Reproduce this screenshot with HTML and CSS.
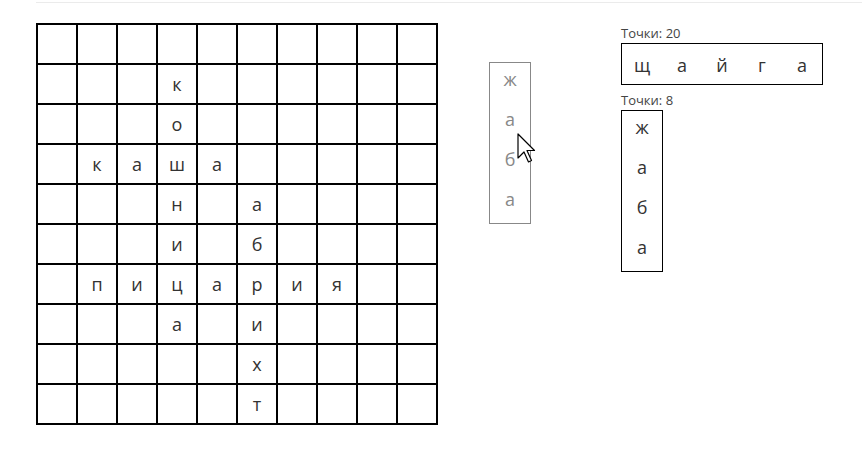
FILE: index.html
```html
<!DOCTYPE html>
<html>

<head>
    <title>Слова</title>
    <link rel="stylesheet" href="styles.css">
</head>

<body>
    <div class="page">
        <div class="game">
            <div class="board" id="board"></div>

            <div class="players">
                <div class="player">
                    <div class="score">Точки: 20</div>
                    <div class="hand">
                        <div class="tile">щ</div>
                        <div class="tile">а</div>
                        <div class="tile">й</div>
                        <div class="tile">г</div>
                        <div class="tile">а</div>
                    </div>
                </div>
                <div class="player">
                    <div class="score">Точки: 8</div>
                    <div class="hand vertical">
                        <div class="tile">ж</div>
                        <div class="tile">а</div>
                        <div class="tile">б</div>
                        <div class="tile">а</div>
                    </div>
                </div>
            </div>

            <div class="dragging">
                <div class="tile">ж</div>
                <div class="tile">а</div>
                <div class="tile">б</div>
                <div class="tile">а</div>
            </div>

            <svg class="cursor" width="20" height="30" viewBox="0 0 20 30">
                <path d="M1 1 L1 25 L7 19 L11.5 29 L14.5 27.5 L10 17.5 L17.5 17.5 Z" fill="#fff" stroke="#000" stroke-width="1.2" stroke-linejoin="round" />
            </svg>
        </div>
    </div>

    <script>
        const rows = [
            '          ',
            '   к      ',
            '   о      ',
            ' каша     ',
            '   н а    ',
            '   и б    ',
            ' пицария  ',
            '   а и    ',
            '     х    ',
            '     т    '
        ];

        const board = document.getElementById('board');
        rows.forEach(row => {
            for (const ch of row) {
                const cell = document.createElement('div');
                cell.className = 'cell';
                cell.textContent = ch.trim();
                board.appendChild(cell);
            }
        });
    </script>
</body>

</html>
```

FILE: styles.css
```css
body {
    margin: 0;
    font-family: "Open Sans", "Noto Sans", sans-serif;
    color: #333;
}

.page {
    margin: 2px 0 0 36px;
    border-top: 1px solid #ebebeb;
    padding-top: 20px;
}

.game {
    position: relative;
    display: flex;
    align-items: flex-start;
}

.board {
    display: grid;
    grid-template-columns: repeat(10, 40px);
    grid-auto-rows: 40px;
    border-left: 2px solid #000;
    border-top: 2px solid #000;
}

.cell {
    border-right: 2px solid #000;
    border-bottom: 2px solid #000;
    display: flex;
    align-items: center;
    justify-content: center;
    font-size: 18px;
}

.players {
    margin-left: 183px;
}

.player {
    margin-bottom: 5px;
}

.score {
    font-size: 13px;
    line-height: 20px;
    color: #444;
}

.hand {
    display: flex;
    border: 1px solid #000;
}

.hand.vertical {
    flex-direction: column;
    width: 40px;
}

.tile {
    box-sizing: border-box;
    width: 40px;
    height: 40px;
    display: flex;
    align-items: center;
    justify-content: center;
    font-size: 18px;
    padding-top: 2px;
}

.vertical .tile,
.dragging .tile {
    padding-top: 0;
    padding-bottom: 8px;
}

.dragging {
    position: absolute;
    left: 453px;
    top: 39px;
    border: 1px solid #888;
    color: #888;
}

.cursor {
    position: absolute;
    left: 481px;
    top: 110px;
}
```
